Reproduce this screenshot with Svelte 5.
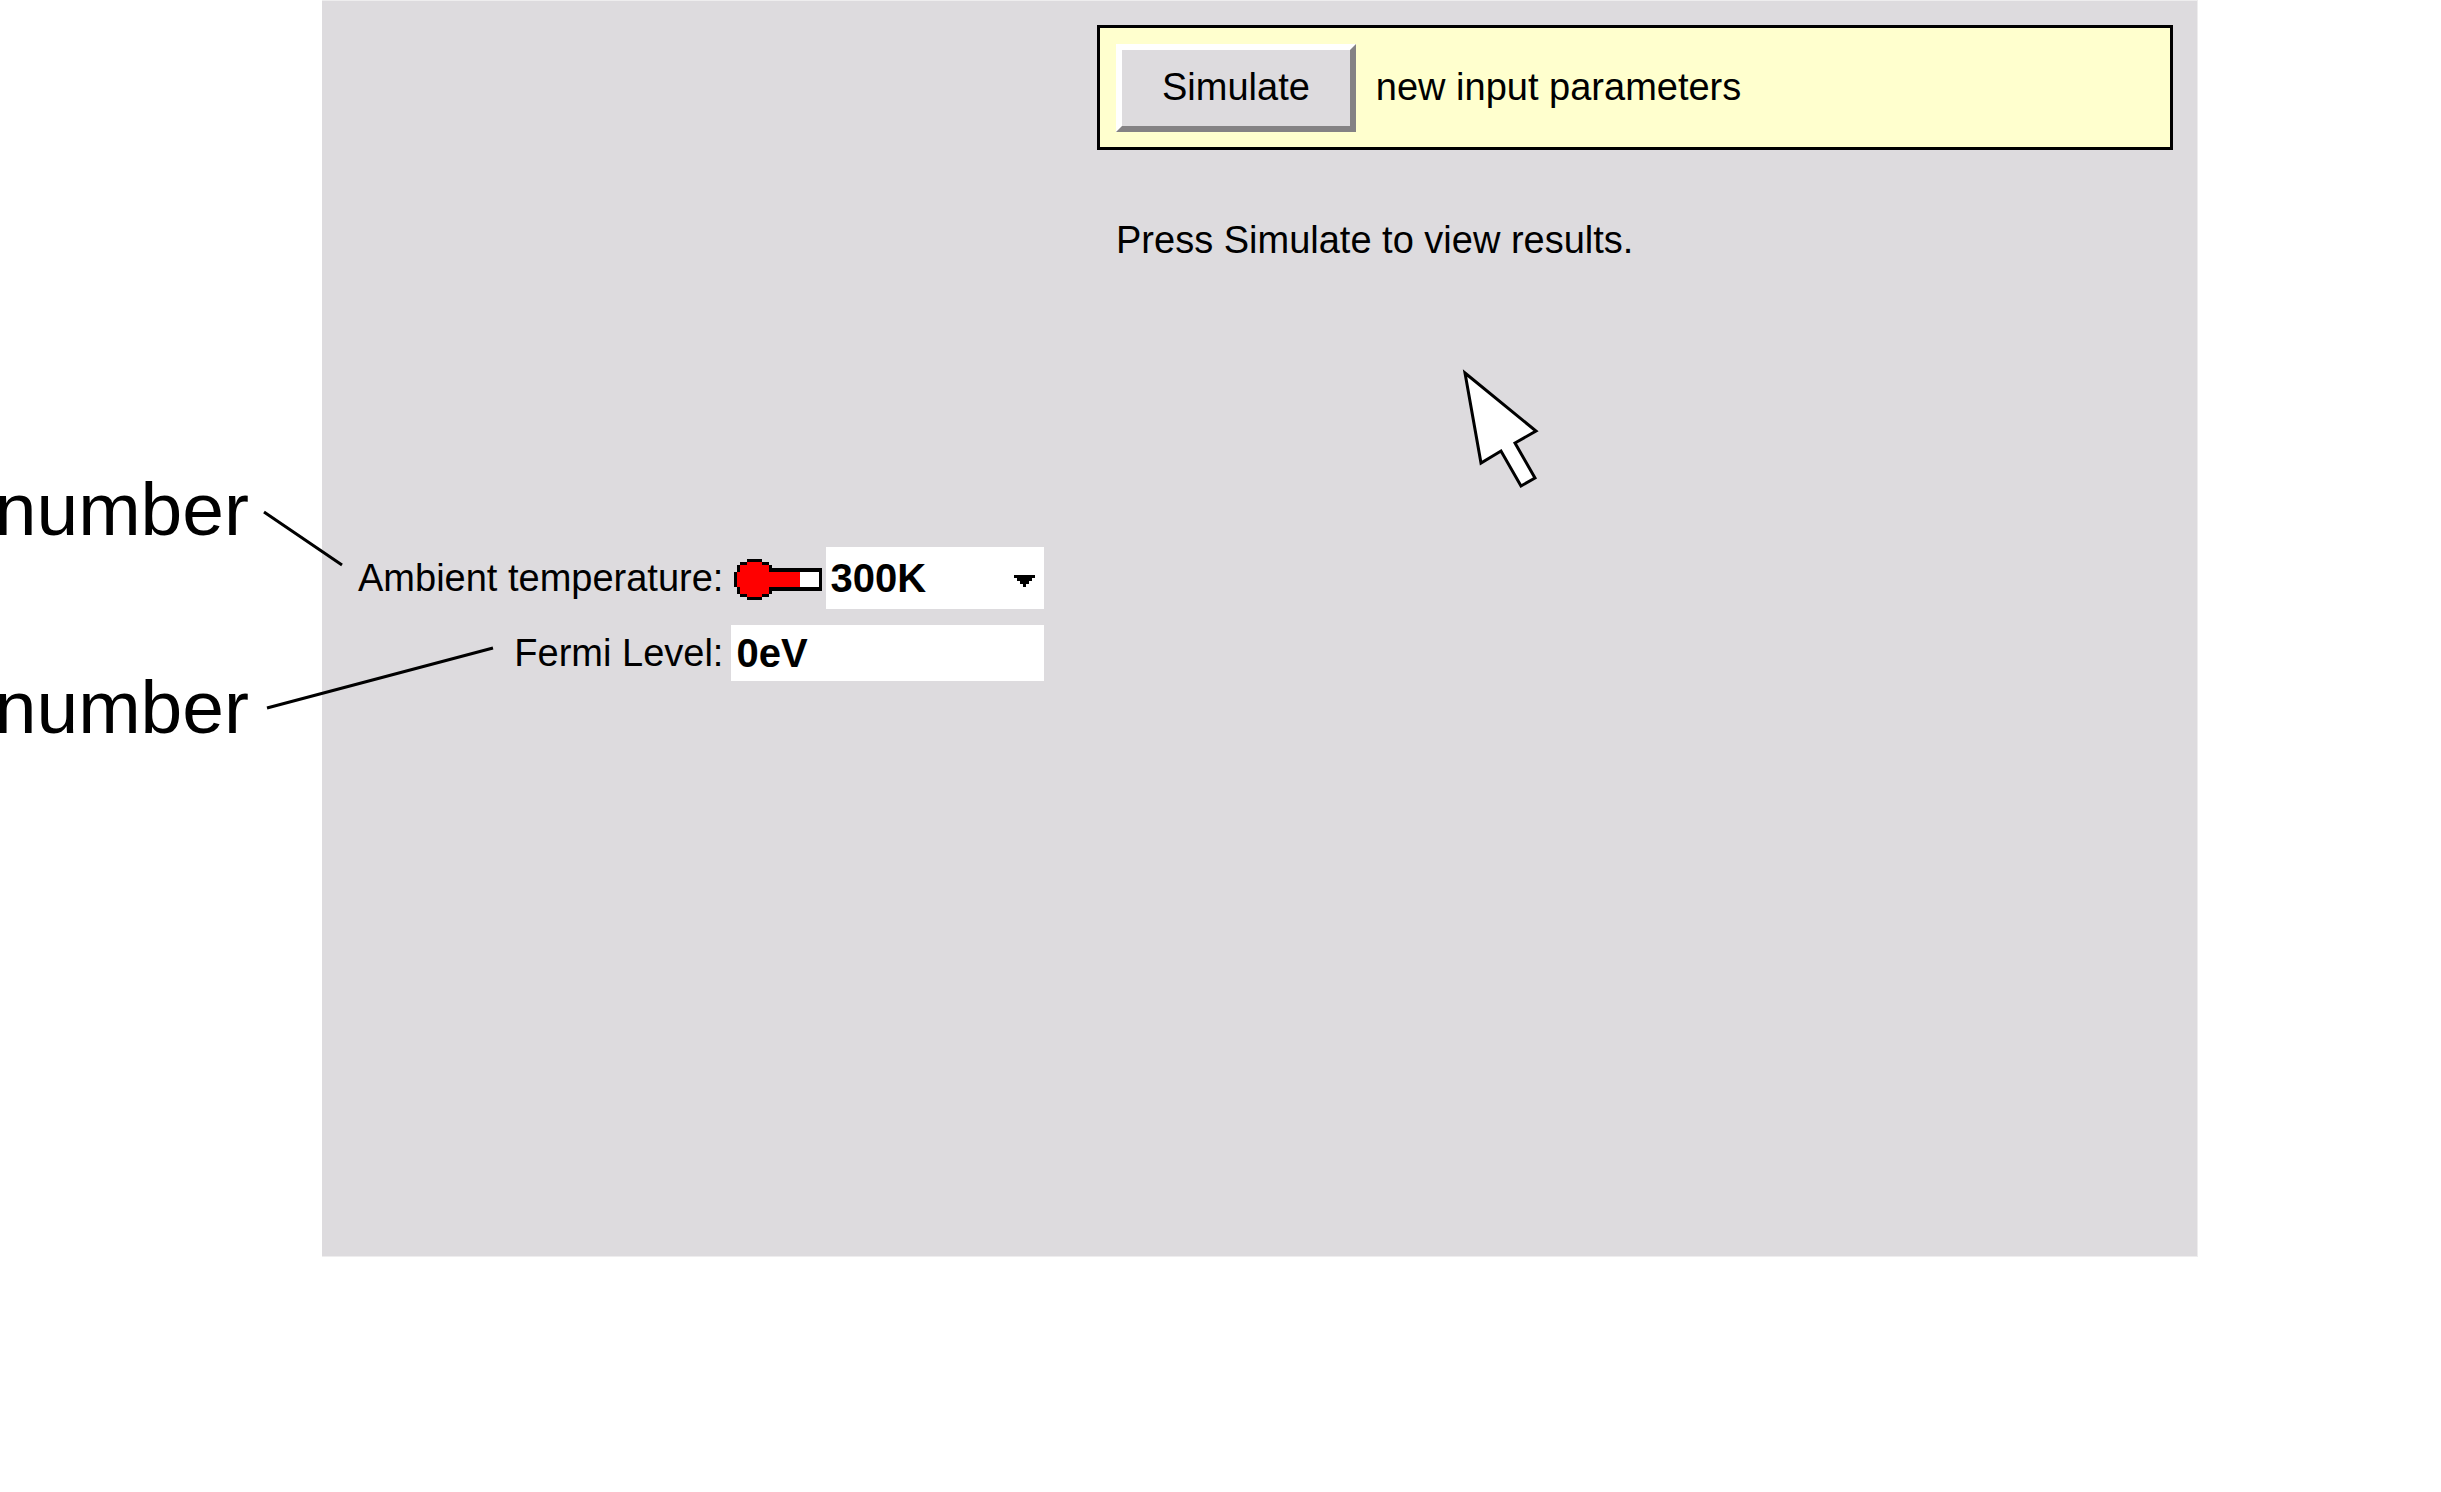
<script>
  const temperatures = ['77K', '300K', '500K'];
  let temperature = $state('300K');
  let fermi = $state('0eV');
</script>

<div class="page">
  <aside class="notes">
    <span>number</span>
    <span>number</span>
  </aside>

  <main class="panel">
    <form class="inputs">
      <label for="temperature">Ambient temperature:</label>
      <div class="control">
        <svg class="thermometer" viewBox="0 0 28 13" preserveAspectRatio="none" shape-rendering="crispEdges" aria-hidden="true">
          <path d="M4 0H9V1H11V2H12V3H28V10H12V11H11V12H9V13H4V12H2V11H1V9H0V4H1V2H2V1H4Z" fill="#000" />
          <path d="M4 1H9V2H11V4H21V9H11V11H9V12H4V11H2V9H1V4H2V2H4Z" fill="#f00" />
          <path d="M21 4H27V9H21Z" fill="#fff" />
        </svg>
        <div class="combo">
          <select id="temperature" bind:value={temperature}>
            {#each temperatures as t}
              <option value={t}>{t}</option>
            {/each}
          </select>
          <svg class="arrow" viewBox="0 0 7 4" aria-hidden="true">
            <path d="M0 0H7V1H6V2H5V3H4V4H3V3H2V2H1V1H0Z" />
          </svg>
        </div>
      </div>

      <label for="fermi">Fermi Level:</label>
      <input id="fermi" type="text" bind:value={fermi} />
    </form>

    <section class="output">
      <div class="status">
        <button type="button">Simulate</button>
        <span>new input parameters</span>
      </div>
      <p>Press Simulate to view results.</p>
    </section>
  </main>

  <svg class="overlay" width="1600" height="760" aria-hidden="true">
    <path d="M264 512L342 565M267 708L493 648" fill="none" stroke="#000" stroke-width="3" />
    <path d="M1465 373L1536 431L1515 443L1535 478L1521 486L1501 451L1481 463Z" fill="#fff" stroke="#000" stroke-width="3" />
  </svg>
</div>

<style>
  :global(body) {
    background: #fff;
  }

  .page {
    position: relative;
    display: grid;
    grid-template-columns: 322px 1fr;
    padding-right: 243px;
    overflow: hidden;
    color: #000;
    font: 38px/44px "Liberation Sans", Arial, sans-serif;
  }

  .notes {
    display: flex;
    flex-direction: column;
    align-items: flex-end;
    gap: 108px;
    padding: 464px 73px 0 0;
    font-size: 75px;
    line-height: 90px;
  }

  .panel {
    display: grid;
    grid-template-columns: 686px 1fr;
    column-gap: 53px;
    padding: 0 24px 0 36px;
    background: #dddbde;
    border: solid #eeedee;
    border-width: 1px 1px 1px 0;
  }

  .inputs {
    display: grid;
    grid-template-columns: 1fr 313px;
    grid-template-rows: 62px 56px;
    align-items: center;
    gap: 16px 8px;
    padding: 546px 0 575px;
  }

  label {
    text-align: right;
    white-space: nowrap;
  }

  .control {
    display: flex;
    align-items: center;
    gap: 4px;
    height: 100%;
    padding-left: 3px;
  }

  .thermometer {
    flex: none;
    width: 88px;
    height: 41px;
    margin-top: 3px;
  }

  .combo {
    position: relative;
    flex: 1;
    height: 100%;
  }

  select,
  input {
    box-sizing: border-box;
    display: block;
    width: 100%;
    height: 100%;
    margin: 0;
    padding: 0 4px;
    appearance: none;
    background: #fff;
    border: 0;
    border-radius: 0;
    color: #000;
    font: bold 40px/44px "Liberation Sans", Arial, sans-serif;
  }

  input {
    padding: 0 5px;
  }

  .arrow {
    position: absolute;
    top: 28px;
    right: 9px;
    width: 21px;
    height: 12px;
    pointer-events: none;
  }

  .output {
    padding-top: 24px;
  }

  .status {
    display: flex;
    align-items: center;
    gap: 20px;
    padding: 16px 16px 15px;
    background: #ffffce;
    border: 3px solid #000;
  }

  .status span {
    padding-bottom: 2px;
  }

  button {
    padding: 15px 40px 17px;
    background: #dddbde;
    border: 6px solid;
    border-color: #fff #848284 #848284 #fff;
    border-radius: 0;
    color: #000;
    font: inherit;
  }

  p {
    margin: 68px 0 0;
    padding-left: 19px;
  }

  .overlay {
    position: absolute;
    top: 0;
    left: 0;
    pointer-events: none;
  }
</style>
